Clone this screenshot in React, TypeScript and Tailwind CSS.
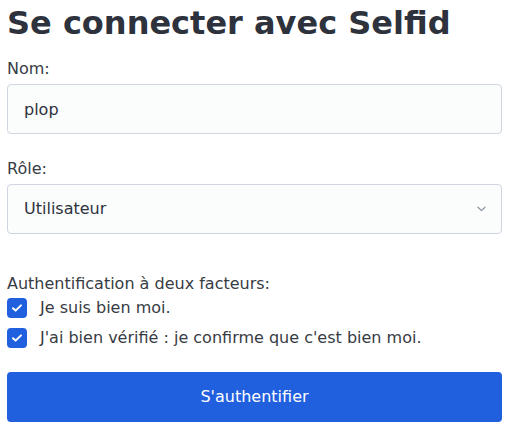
import { useState } from 'react'

function Check() {
  return (
    <svg width="12" height="10" viewBox="0 0 12 10" fill="none" aria-hidden="true">
      <path d="M2 5.2 4.6 7.6 10 2.4" stroke="white" strokeWidth="2" strokeLinecap="round" strokeLinejoin="round" />
    </svg>
  )
}

function CheckRow({ label }: { label: string }) {
  const [checked, setChecked] = useState(true)
  return (
    <label className="flex h-6 cursor-pointer items-center gap-[13px]" onClick={() => setChecked(!checked)}>
      <span
        className={
          checked
            ? 'flex h-5 w-5 shrink-0 items-center justify-center rounded-[4px] bg-[#2060df]'
            : 'flex h-5 w-5 shrink-0 items-center justify-center rounded-[4px] border border-[#cfd5e2] bg-[#fbfcfc]'
        }
      >
        {checked ? <Check /> : null}
      </span>
      <span>{label}</span>
    </label>
  )
}

export default function App() {
  const [name, setName] = useState('plop')

  return (
    <div
      className="min-h-[429px] bg-white px-[7px] pt-[5px] text-[16px] leading-6 text-[#373c44]"
      style={{ fontFamily: '"DejaVu Sans", Verdana, sans-serif' }}
    >
      <h1 className="text-[32px] font-bold leading-[36px] text-[#2d323d]">Se connecter avec Selfid</h1>

      <form className="mt-4 flex flex-col" onSubmit={(event) => event.preventDefault()}>
        <label htmlFor="nom">Nom:</label>
        <input
          id="nom"
          value={name}
          onChange={(event) => setName(event.target.value)}
          className="mt-[3px] h-[50px] w-full rounded-[4px] border border-[#cfd5e2] bg-[#fbfcfc] px-4 text-[#2d323d] outline-none"
        />

        <label htmlFor="role" className="mt-[23px]">
          Rôle:
        </label>
        <div className="mt-[3px] flex h-[50px] w-full items-center justify-between rounded-[4px] border border-[#cfd5e2] bg-[#fbfcfc] pl-4 pr-[15px] text-[#2d323d]">
          <span id="role">Utilisateur</span>
          <svg width="9" height="6" viewBox="0 0 9 6" fill="none" aria-hidden="true">
            <path d="M1 1.2 4.5 4.6 8 1.2" stroke="#8a93a5" strokeWidth="1.2" strokeLinecap="round" strokeLinejoin="round" />
          </svg>
        </div>

        <p className="mt-[38px]">Authentification à deux facteurs:</p>
        <div className="flex flex-col gap-[6px]">
          <CheckRow label="Je suis bien moi." />
          <CheckRow label="J'ai bien vérifié : je confirme que c'est bien moi." />
        </div>

        <button
          type="submit"
          className="mt-[22px] h-[50px] w-full rounded-[4px] bg-[#2060df] text-white"
        >
          S'authentifier
        </button>
      </form>
    </div>
  )
}
